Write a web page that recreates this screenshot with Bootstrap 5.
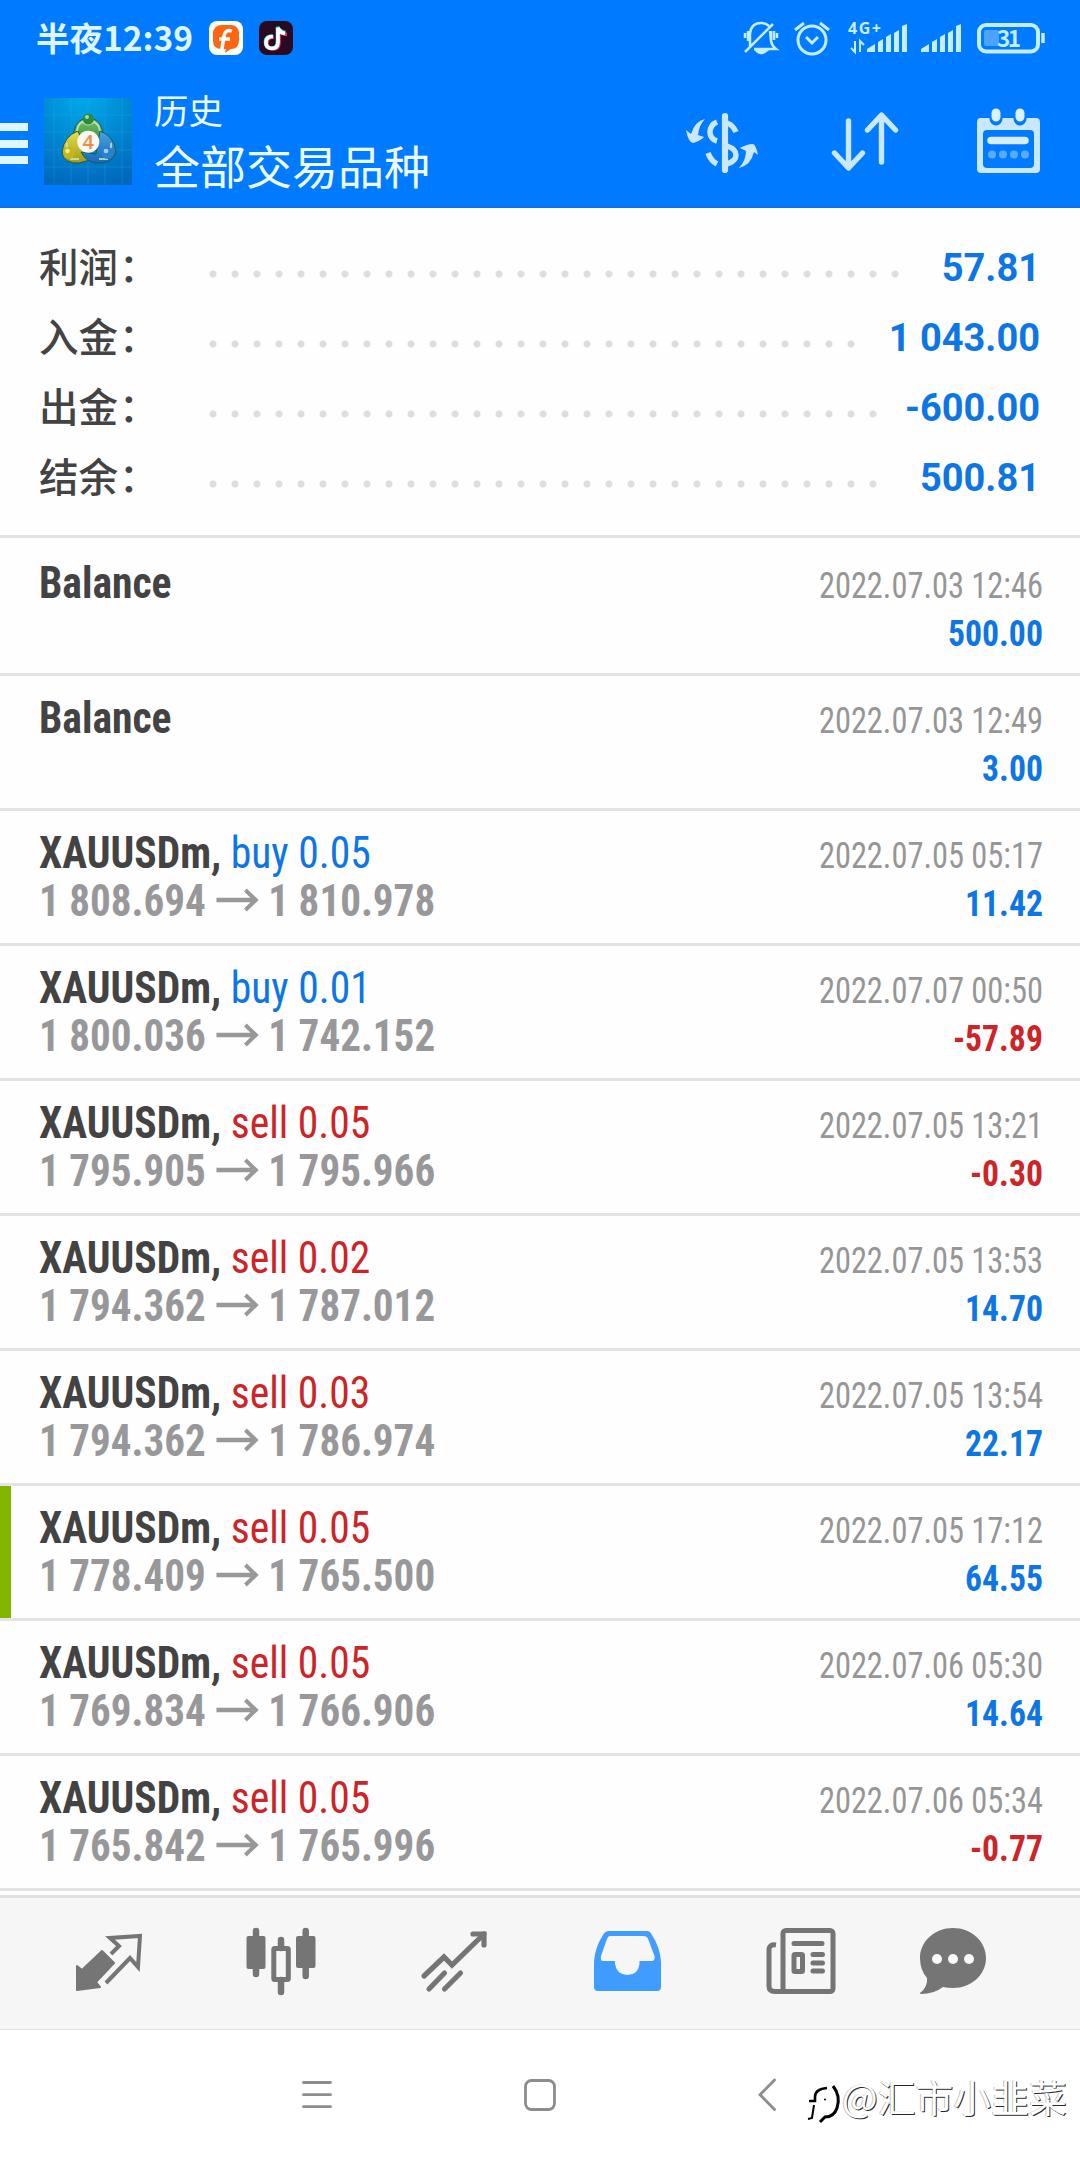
<!DOCTYPE html>
<html lang="zh-CN">
<head>
<meta charset="utf-8">
<meta name="viewport" content="width=device-width, initial-scale=1">
<title>历史</title>
<link href="https://cdn.jsdelivr.net/npm/bootstrap@5.3.0/dist/css/bootstrap.min.css" rel="stylesheet">
<style>
body{width:1080px;height:2160px;overflow:hidden;font-family:Roboto,"Noto Sans CJK SC",sans-serif;background:#fefefe;color:#434343}
svg{display:block;flex:none;overflow:visible}
.topbar{background:#007aff;height:208px;color:#eafaff;border-bottom:2px solid #0b72e3}
.statusbar{height:77px;padding-left:36px}
.clock{font:700 33.5px/74px "Noto Sans CJK SC",sans-serif;width:173px;white-space:nowrap;color:#dcf5ff}
.appbar{height:129px}
.cjk{font-family:"Noto Sans CJK SC",sans-serif}
.titles{width:531px;padding-left:22px}
.ttl-a{font-size:34.5px;line-height:44px;margin-top:10px}
.ttl-b{font-size:46px;line-height:62px;margin-top:2px}
.totals{height:330px;padding:25px 40px 0 39px;border-bottom:3px solid #e3e3e3}
.total-line{height:70px}
.total-label{width:163px;font-weight:500;font-size:39.5px;line-height:63px;white-space:nowrap}
.total-label span{margin-left:1px}
.leader{height:70px;background:radial-gradient(circle at 11px 41px,#dedede 3.1px,transparent 4px) 0 0/22px 70px repeat-x}
.total-val{font-weight:700;font-size:38px;line-height:70px;white-space:pre}
.blue{color:#0d76e4}
.red{color:#cb2529}
.deal{height:135px;padding:18px 37.5px 0 38.5px;border-bottom:3px solid #e3e3e3;font-family:"Roboto Condensed",Roboto,sans-serif;line-height:48px}
.deal.first{height:138px;padding-top:21px}
.deal.marked{background:linear-gradient(90deg,#80b500 11px,transparent 11px)}
.sym{font-size:44px;font-weight:700;transform:scaleX(.945);transform-origin:0 0;white-space:pre}
.sym span{font-weight:400}
.price{font-size:44px;font-weight:700;color:#98989a;transform:scaleX(.934);transform-origin:0 0;white-space:pre}
.price svg{margin:0 11px 3px}
.when{font-size:36px;color:#969696;transform:scaleX(.9);transform-origin:100% 0;margin-top:3px;white-space:pre}
.amount{font-size:36px;font-weight:700;transform:scaleX(.935);transform-origin:100% 0}
.tail{height:4px}
.tabbar{height:135px;background:#f6f6f6;border-top:3px solid #e1e1e1;border-bottom:1px solid #e0e0e0;padding-left:22px}
.sysnav{height:130px;background:#fff}
.wm{font-family:"Noto Sans CJK SC",sans-serif;font-size:37.8px;line-height:50px;color:#fff;text-shadow:1px 1px 0 #2a2a2a,-1px 0 0 #c4c4c4;white-space:nowrap}
</style>
</head>
<body class="d-flex flex-column">
<header class="topbar flex-shrink-0">
  <div class="statusbar d-flex align-items-start">
    <div class="clock">半夜12:39</div>
    <svg width="34" height="34" viewBox="209 21 34 34" style="margin-top:21px"><rect x="209" y="21" width="34" height="34" rx="8" fill="#fff"/><path d="M213 33q1-8 9-8h9q7 0 8 8v7q0 9-8 9l-6 4 1-4h-4q-9 0-9-8z" fill="#ff6410"/><path d="M232 31q-7-2-8 5l-2.500 16M219 39h11" fill="none" stroke="#fff" stroke-width="3.500"/></svg>
    <svg width="34" height="34" viewBox="259 21 34 34" style="margin:21px 0 0 16px"><rect x="259" y="21" width="34" height="34" rx="8" fill="#2a0a20"/><g fill="none" stroke-width="3.600"><path d="M274 37q-7 0-7 6t6 6 6-6V29q2 5 8 5.500" stroke="#f02b5a"/><path d="M272.500 36q-7 0-7 6t6 6 6-6V27q2 5 8 5.500" stroke="#25e5df"/><path d="M273 36.500q-7 0-7 6t6 6 6-6V28q2 5 7 5.500" stroke="#fff"/></g></svg>
    <svg width="302" height="40" viewBox="743 20 302 40" fill="none" stroke="#c4eeff" style="margin:20px 0 0 450px">
      <g stroke-width="2.500"><path d="M745 52l28-28M750 46V34q1-11 11-11 5 0 8 3M770 31l1 10q1 5 5 8h-22M745 33v5M748 31v10M774 31v9M777 33v5M771 31v9"/><path d="M757 51q4 4 9 0z" fill="#c4eeff"/></g>
      <g stroke-width="3"><circle cx="812" cy="40" r="14"/><path d="M806 37l6 6 6-6M795 30l9-7M829 30l-9-7"/></g>
      <text x="848" y="33.500" font-family="Open Sans,sans-serif" font-weight="700" font-size="16" stroke="none" fill="#c4eeff" textLength="33">4G+</text>
      <path d="M855 41v11l-4-4M860 52V41l4 4" stroke-width="2"/>
      <path stroke="none" fill="#c4eeff" d="M867 52v-3l8-5v8zM878 52V42l5-3v13zM886 52V37l5-3v18zM894 52V33l5-3v22zM902 52V26l5-2v28z"/>
      <path transform="translate(54)" stroke="none" fill="#c4eeff" d="M867 52v-3l8-5v8zM878 52V42l5-3v13zM886 52V37l5-3v18zM894 52V33l5-3v22zM902 52V26l5-2v28z"/>
      <rect x="979" y="25" width="59" height="26.500" rx="7" stroke-width="4"/><rect x="984" y="30" width="15" height="16" rx="2" stroke="none" fill="#4aa3ff"/><path d="M1043 33v10" stroke-width="3.500"/>
      <text x="997" y="47" font-family="Noto Sans CJK SC,sans-serif" font-weight="700" font-size="22.500" stroke="none" fill="#c4eeff" textLength="24">31</text>
    </svg>
  </div>
  <div class="appbar d-flex align-items-start">
    <svg width="28" height="42" viewBox="0 123 28 42" style="margin-top:46px" fill="#dff5ff"><path d="M0 123h28v8H0zM0 140h28v8H0zM0 156h28v8H0z"/></svg>
    <svg width="88" height="87" viewBox="44 98 88 87" style="margin:21px 0 0 16px">
      <defs>
        <radialGradient id="sky" cx=".45" cy="0" r="1.050"><stop offset="0" stop-color="#00a9ea"/><stop offset="1" stop-color="#0067bb"/></radialGradient>
        <linearGradient id="g" x2="0" y2="1"><stop stop-color="#7cc46a"/><stop offset="1" stop-color="#1d7a2c"/></linearGradient>
        <linearGradient id="y" x2="0" y2="1"><stop stop-color="#e6df4a"/><stop offset="1" stop-color="#a09a17"/></linearGradient>
        <linearGradient id="b" x2="0" y2="1"><stop stop-color="#4aa3e0"/><stop offset="1" stop-color="#1769b5"/></linearGradient>
      </defs>
      <rect x="44" y="98" width="88" height="87" fill="url(#sky)"/>
      <path d="M44 115h88M44 132h88M44 150h88M44 167h88M54 98v87M71 98v87M88 98v87M105 98v87M122 98v87" stroke="#35b5ee" stroke-opacity=".25" fill="none"/>
      <g stroke="#1b5a55" stroke-width="1"><path d="M73 141q-1-20 15-24 16 3 16 24-3 7-8 10l-8-16z" fill="url(#g)"/><path d="M78 131q-14 5-16 21 2 12 17 11l11-3-7-16z" fill="url(#y)"/><path d="M100 131q14 5 16 21-4 12-17 11-13 0-18-11l15 2z" fill="url(#b)"/></g>
      <path d="M77 131q1-8 6-9 5 5 11 0 5 2 6 9M67 143q-1 6 4 9v7h8M111 143q1 6-4 9v7h-8" fill="none" stroke="#cfeec8" stroke-opacity=".75" stroke-width="2"/>
      <circle cx="88.300" cy="119" r="5.500" fill="#2d8a3a"/><circle cx="69" cy="153" r="6" fill="#c2b71e"/><circle cx="107.500" cy="153" r="6" fill="#2b82cc"/>
      <circle cx="87" cy="117" r="2" fill="#a5dc9d"/><circle cx="67.500" cy="151" r="2.300" fill="#f3ee8b"/><circle cx="106" cy="151" r="2.300" fill="#9bd0f5"/>
      <circle cx="88.300" cy="141.700" r="11" fill="#faf8f2"/><text x="88.300" y="149" text-anchor="middle" font-family="Open Sans,sans-serif" font-weight="600" font-size="20" fill="#ee8d48">4</text>
    </svg>
    <div class="titles cjk"><div class="ttl-a">历史</div><div class="ttl-b">全部交易品种</div></div>
    <svg width="74" height="60" viewBox="685 111 74 60" style="margin:34px 0 0 22px" fill="none" stroke="#c9e8ff" stroke-width="5.500"><path d="M725 116v54" stroke-width="6.200" stroke-linecap="round"/><path d="M717 122q-7 3-7 10t7 9M717 164q-6-3-9-11M727 123q6 2 9 9M727 146q9 3 9 9t-9 9"/><path stroke="none" fill="#c9e8ff" d="M705 119q-10 2-14 15l-5-4q2 12 7 13 7-2 11-6l-6-2q1-10 7-16zM739 168q12-3 15-16l4 3q-2-10-5-11-6 0-13 4l6 3q0 9-7 17z"/></svg>
    <svg width="68" height="62" viewBox="831 111 68 62" style="margin:34px 0 0 72px" fill="none" stroke="#c9e8ff" stroke-width="5.400" stroke-linecap="round" stroke-linejoin="round"><path d="M848.500 121v46M834.500 153l14 15 14-15M881.500 162v-46M867.500 130l14-15 14 15"/></svg>
    <svg width="64" height="66" viewBox="976 108 64 66" style="margin:31px 0 0 77px"><path fill="#c9e8ff" fill-rule="evenodd" d="M981 118h55q4 0 4 4v47q0 4-4 4h-55q-4 0-4-4v-47q0-4 4-4zm6 12q-4 0-4 4v30q0 4 4 4h43q4 0 4-4v-30q0-4-4-4z"/><path d="M996 113v6M1020 113v6" stroke="#007aff" stroke-width="13" stroke-linecap="round"/><path d="M996 113v4M1020 113v4" stroke="#dcf0ff" stroke-width="9" stroke-linecap="round"/><path d="M991 140.500h34" stroke="#d6ecff" stroke-width="7.500" stroke-linecap="round"/><g fill="#58acff"><circle cx="992" cy="154.500" r="4"/><circle cx="1003" cy="154.500" r="4"/><circle cx="1014" cy="154.500" r="4"/><circle cx="1025" cy="154.500" r="4"/></g></svg>
  </div>
</header>

<section class="totals flex-shrink-0">
  <div class="total-line d-flex"><div class="total-label cjk">利润<span>：</span></div><div class="leader" style="width:704px"></div><div class="total-val blue ms-auto">57.81</div></div>
  <div class="total-line d-flex"><div class="total-label cjk">入金<span>：</span></div><div class="leader" style="width:660px"></div><div class="total-val blue ms-auto">1 043.00</div></div>
  <div class="total-line d-flex"><div class="total-label cjk">出金<span>：</span></div><div class="leader" style="width:682px"></div><div class="total-val blue ms-auto">-600.00</div></div>
  <div class="total-line d-flex"><div class="total-label cjk">结余<span>：</span></div><div class="leader" style="width:682px"></div><div class="total-val blue ms-auto">500.81</div></div>
</section>

<main id="deals" class="flex-shrink-0"></main>
<div class="tail flex-shrink-0"></div>

<nav class="tabbar d-flex flex-shrink-0">
  <svg width="173" height="131" viewBox="22 1898 173 131"><path fill="#757575" stroke="#757575" stroke-width="2" stroke-linejoin="round" d="M102 1951l12 12-18 19 4 5-23 3v-24l5 4z"/><path d="M111 1954l8-8-9-8 30-2-2 31-8-9-24 25" fill="none" stroke="#757575" stroke-width="4"/></svg>
  <svg width="173" height="131" viewBox="195 1898 173 131" fill="#757575"><rect x="246.500" y="1936" width="19" height="33" rx="2"/><rect x="296" y="1936" width="19.500" height="32" rx="2"/><path d="M256 1931v43M305.700 1931v45M281 1940v8M281 1980v12" stroke="#757575" stroke-width="6.500" stroke-linecap="round"/><rect x="273.800" y="1948.500" width="14.500" height="31" rx="1" fill="none" stroke="#757575" stroke-width="5"/></svg>
  <svg width="173" height="131" viewBox="368 1898 173 131" fill="none" stroke="#757575" stroke-width="5.200"><path stroke-linecap="round" d="M424 1976l20-19 8 8 32-31"/><path stroke-linecap="round" d="M473 1934h11v11M429 1989l15.500-16M444.500 1989l16-16"/></svg>
  <svg width="173" height="131" viewBox="541 1898 173 131"><path fill="#409cff" fill-rule="evenodd" d="M609 1931h38q3 0 5 4 8 12 9 27v25q0 4-4 4h-59q-4 0-4-4v-25q1-15 9-27 2-4 6-4zm1 5q-2 0-3 3l-6 17q-1 5 2 5h12v3q2 11 12.500 11t12-11v-3h12q4 0 3-5l-6-16q-1-4-5-4z"/></svg>
  <svg width="173" height="131" viewBox="714 1898 173 131" fill="none" stroke="#757575" stroke-width="5"><rect x="783" y="1930.500" width="50" height="61" rx="3"/><path d="M776 1945q-7-1-7 5v36q0 5.500 6 5.500h10"/><g stroke-linecap="round"><path d="M794 1943.500h28"/><path d="M813 1954.500h9.500M813 1963h9.500M813 1971h9.500"/></g><rect x="794" y="1954.500" width="8.500" height="17" rx="1"/></svg>
  <svg width="133" height="131" viewBox="887 1898 133 131"><path fill="#757575" d="M953 1928c18 0 33 13 33 30s-15 30-33 30q-6 0-10-1-9 7-22 7-1 0-1-1 8-6 7-15-7-8-7-20c0-17 15-30 33-30z"/><g fill="#f8f8f8"><circle cx="937" cy="1959" r="5"/><circle cx="953" cy="1959" r="5"/><circle cx="969" cy="1959" r="5"/></g></svg>
</nav>

<footer class="sysnav d-flex flex-shrink-0">
  <svg width="776" height="130" viewBox="0 2030 776 130" fill="none" stroke="#8d8d8d" stroke-width="2.800"><path stroke-linecap="round" d="M303.500 2082.500h27M303.500 2094.700h27M303.500 2106.700h27"/><rect x="525.500" y="2080.500" width="29" height="29" rx="6"/><path stroke-linecap="round" d="M774.500 2080l-14.500 14.700 14.500 14.800"/></svg>
  <svg width="36" height="54" viewBox="806 2074 36 54" fill="none" stroke="#000" stroke-width="2.600" style="margin:44px 0 0 30px"><path d="M809 2101h6v-4q0-8 12-9"/><path d="M833 2086q8 10 4 22-3 9-12 9l-5 5" stroke-width="3"/><path d="M814 2105l-2 13-4 1" stroke-width="2"/><circle cx="825" cy="2099.500" r="1" stroke="none" fill="#000"/></svg>
  <div class="wm" style="margin-top:41px">@汇市小韭菜</div>
</footer>

<script src="https://cdn.jsdelivr.net/npm/bootstrap@5.3.0/dist/js/bootstrap.bundle.min.js"></script>
<script>
const deals = [
  ['Balance','','','','2022.07.03 12:46','500.00'],
  ['Balance','','','','2022.07.03 12:49','3.00'],
  ['XAUUSDm,','buy 0.05','1 808.694','1 810.978','2022.07.05 05:17','11.42'],
  ['XAUUSDm,','buy 0.01','1 800.036','1 742.152','2022.07.07 00:50','-57.89'],
  ['XAUUSDm,','sell 0.05','1 795.905','1 795.966','2022.07.05 13:21','-0.30'],
  ['XAUUSDm,','sell 0.02','1 794.362','1 787.012','2022.07.05 13:53','14.70'],
  ['XAUUSDm,','sell 0.03','1 794.362','1 786.974','2022.07.05 13:54','22.17'],
  ['XAUUSDm,','sell 0.05','1 778.409','1 765.500','2022.07.05 17:12','64.55'],
  ['XAUUSDm,','sell 0.05','1 769.834','1 766.906','2022.07.06 05:30','14.64'],
  ['XAUUSDm,','sell 0.05','1 765.842','1 765.996','2022.07.06 05:34','-0.77']
];
const arrow = '<svg width="45" height="24" viewBox="0 0 45 24" fill="none" stroke="#98989a" stroke-width="4.300"><path d="M0 12h42M31 2l11 10-11 10"/></svg>';
document.getElementById('deals').innerHTML = deals.map(([s,op,a,b,t,v],i) => `
  <div class="deal d-flex justify-content-between${i===0?' first':''}${i===7?' marked':''}">
    <div><div class="sym">${s}${op?` <span class="${op[0]==='b'?'blue':'red'}">${op}</span>`:''}</div>
    ${a?`<div class="price d-flex align-items-center"><span>${a}</span>${arrow}<span>${b}</span></div>`:''}</div>
    <div class="text-end"><div class="when">${t}</div><div class="amount ${v[0]==='-'?'red':'blue'}">${v}</div></div>
  </div>`).join('');
</script>
</body>
</html>
